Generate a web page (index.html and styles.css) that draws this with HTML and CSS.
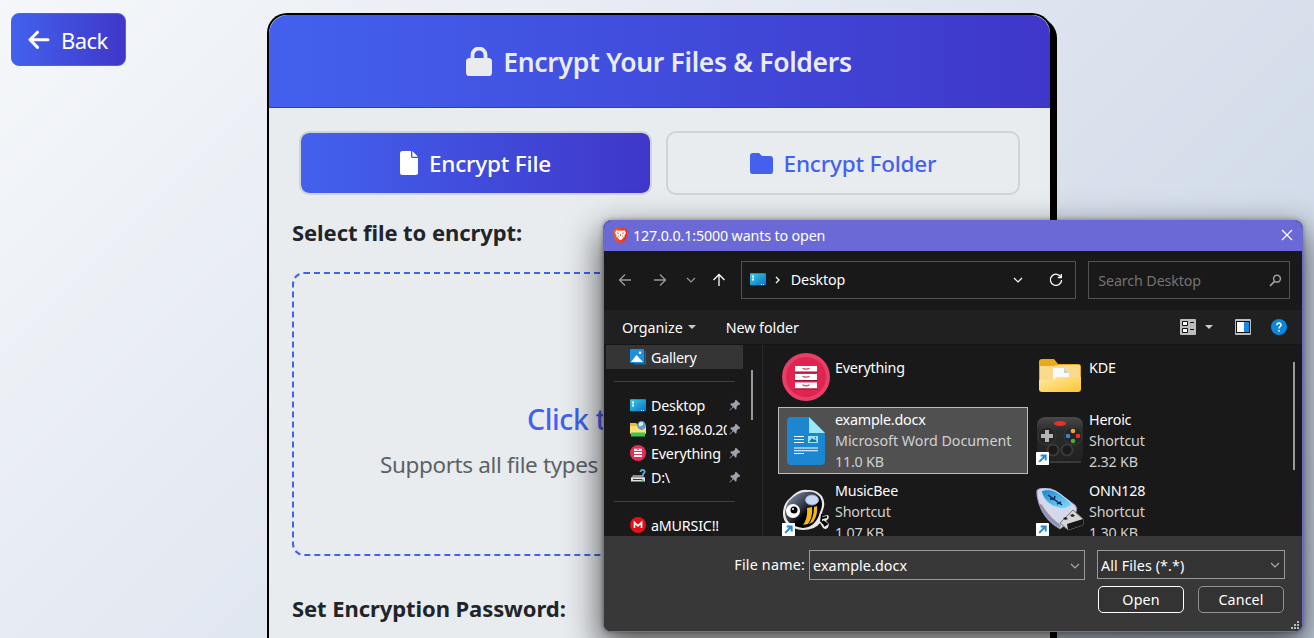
FILE: index.html
```html
<!DOCTYPE html>
<html lang="en">
<head>
<meta charset="utf-8">
<title>Encrypt Your Files &amp; Folders</title>
<link rel="stylesheet" href="styles.css">
</head>
<body>
<a class="back"><svg width="22" height="20" viewBox="0 0 22 20"><path d="M9.5 2.2 2 9.8l7.5 7.6M2.4 9.8H20" fill="none" stroke="#fff" stroke-width="3" stroke-linecap="round" stroke-linejoin="round"/></svg><span>Back</span></a>

<main class="card">
  <header class="card-header">
    <svg width="26" height="30" viewBox="0 0 26 30"><path d="M6.5 14V8a6.5 6.5 0 0 1 13 0v6" fill="none" stroke="#e9ecef" stroke-width="3.8"/><rect x="0" y="11" width="26" height="18" rx="3.6" fill="#e9ecef"/></svg>
    <h1>Encrypt Your Files &amp; Folders</h1>
  </header>
  <div class="card-body">
    <div class="tabs">
      <div class="tab tab-active"><svg width="18" height="24" viewBox="0 0 18 24"><path d="M2.500 0H11v5.500a1.500 1.500 0 0 0 1.500 1.500H18v14.500a2.500 2.500 0 0 1-2.500 2.500h-13A2.500 2.500 0 0 1 0 21.500v-19A2.500 2.500 0 0 1 2.500 0zM12.300 0 18 5.700h-5.700z" fill="#fff"/></svg><span>Encrypt File</span></div>
      <div class="tab"><svg width="23" height="21" viewBox="0 0 24 21" preserveAspectRatio="none"><path d="M2.500 0H9.500L12.500 3H21.500A2.500 2.500 0 0 1 24 5.500V18.500A2.500 2.500 0 0 1 21.500 21H2.500A2.500 2.500 0 0 1 0 18.500V2.500A2.500 2.500 0 0 1 2.500 0z" fill="#4361ee"/></svg><span>Encrypt Folder</span></div>
    </div>
    <h2 class="label label-file">Select file to encrypt:</h2>
    <div class="drop">
      <p class="drop-title">Click to upload</p>
      <p class="drop-note">Supports all file types</p>
    </div>
    <h2 class="label label-pass">Set Encryption Password:</h2>
  </div>
</main>

<svg class="defs" width="0" height="0">
  <defs>
    <linearGradient id="screen" x1="0" y1="0" x2="1" y2="1"><stop offset="0" stop-color="#35cfe4"/><stop offset="1" stop-color="#0f6fc6"/></linearGradient>
    <linearGradient id="brave" x1="0" x2="1"><stop offset="0" stop-color="#ff5a1f"/><stop offset="1" stop-color="#f0290f"/></linearGradient>
    <linearGradient id="folder" x1="0" y1="0" x2="1" y2="1"><stop offset="0" stop-color="#ffe9a8"/><stop offset="1" stop-color="#fcc62e"/></linearGradient>
    <linearGradient id="pad" x1="0" y1="0" x2="0" y2="1"><stop offset="0" stop-color="#4a4a4a"/><stop offset=".3" stop-color="#2b2b2b"/><stop offset="1" stop-color="#202020"/></linearGradient>
    <linearGradient id="usb" x1="0" y1="0" x2="1" y2="1"><stop offset="0" stop-color="#1d7fd0"/><stop offset="1" stop-color="#86e2fb"/></linearGradient>
    <linearGradient id="bee" x1="0" y1="0" x2="1" y2="1"><stop offset="0" stop-color="#9aa6c0"/><stop offset=".45" stop-color="#2c3140"/><stop offset=".6" stop-color="#000"/></linearGradient>
    <symbol id="desktop" viewBox="0 0 16 13"><rect y=".3" width="16" height="12" rx="1" fill="url(#screen)"/><path d="M2 2.500h2v2H2zM2 5.500h2v2H2zM11 11h1v1h-1zM13 11h1v1h-1z" fill="#fff"/></symbol>
    <symbol id="pin" viewBox="0 0 12 12"><path d="m7 .8 4.300 4.300-1 .8-.8-.1-1.800 1.800-.1 2.200-.9.900L4.200 8.200 1 11.400l-.5-.5L3.700 7.700 1.200 5.200l.9-.9 2.200-.1L6.100 2.400 6 1.600z" fill="#9ba3ac"/></symbol>
    <symbol id="drawer" viewBox="0 0 48 48"><circle cx="24" cy="24" r="24" fill="#e64068"/><circle cx="24" cy="24" r="20" fill="#e02450"/><path d="M13 13h22v6H13zM13 21h22v6H13zM13 29.500h22v6H13z" fill="#fff"/><path d="M12.500 19h23M12.500 27.500h23M12.500 36h23" stroke="#8e1231"/><path d="M20.500 15.300q3.500 1.700 7 0M20.500 23.300q3.500 1.700 7 0M20.500 31.700q3.500 2.500 7 0" fill="none" stroke="#d8415d" stroke-width="1.200"/></symbol>
    <symbol id="drawer-small" viewBox="0 0 16 16"><circle cx="8" cy="8" r="8" fill="#e22f58"/><path d="M4 3.700h8V6H4zM4 7h8v2H4zM4 10h8v2H4z" fill="#fff"/><path d="M7 4.700h2" stroke="#e22f58"/></symbol>
    <symbol id="arrow" viewBox="0 0 13 13"><rect width="13" height="13" rx=".7" fill="#fff"/><path d="M3.200 9.800 9 4M4.700 3.500h5v5" fill="none" stroke="#2188d9" stroke-width="1.900"/></symbol>
    <symbol id="chev" viewBox="0 0 10 6"><path d="m1 1 4 4 4-4" fill="none" stroke="currentColor" stroke-width="1.200"/></symbol>
  </defs>
</svg>

<section class="dialog">
  <div class="titlebar">
    <svg class="lion" width="15" height="17" viewBox="0 0 15 17"><path d="M4 .5h7l1.600 1.700 1.100-.2.900 2.200-.5 1.300.3 1.500-1.700 6.200L7.500 16.600 2.300 13.200.6 7l.3-1.500-.5-1.300L1.300 2l1.100.2z" fill="url(#brave)"/><path d="m3.200 3.300 2.500.5 1.800-.4 1.800.4 2.500-.5L13 6l-1.600 2.500.4 1-1.700 1.200-.7 1.300-1.900 1.200L5.600 12l-.7-1.300-1.700-1.200.4-1L2 6z" fill="#fff"/><path d="m3.900 5.800 2 .6M11.100 5.800l-2 .6M7.500 7.200v2M5.200 9l1 .8M9.800 9l-1 .8" stroke="#fa4b1c" stroke-width=".9"/></svg>
    <span>127.0.0.1:5000 wants to open</span>
    <svg class="close" width="12" height="12" viewBox="0 0 12 12"><path d="m1 1 10 10M11 1 1 11" stroke="#fff" stroke-width="1.200"/></svg>
  </div>
  <div class="nav">
    <div class="nav-btns">
      <svg class="dim" width="14" height="14" viewBox="0 0 14 14"><path d="M7 1.500 1.500 7 7 12.500M1.500 7H13" class="line"/></svg>
      <svg class="dim" width="14" height="14" viewBox="0 0 14 14"><path d="M7 1.500 12.500 7 7 12.500M12.500 7H1" class="line"/></svg>
      <svg class="dim" width="10" height="6"><use href="#chev"/></svg>
      <svg width="14" height="14" viewBox="0 0 14 14"><path d="M1.500 7 7 1.500 12.500 7M7 1.500V13" class="line"/></svg>
    </div>
    <div class="address">
      <svg width="16" height="13"><use href="#desktop"/></svg>
      <svg class="crumb" width="5" height="8" viewBox="0 0 5 8"><path d="M1 1l3 3-3 3" class="line"/></svg>
      <span>Desktop</span>
      <svg class="addr-chev" width="10" height="6"><use href="#chev"/></svg>
      <svg width="14" height="14" viewBox="0 0 14 14"><path d="M12 4.300A5.600 5.600 0 1 0 12.600 7M12.300 1v3.500H8.800" class="line"/></svg>
    </div>
    <div class="search"><span>Search Desktop</span><svg width="13" height="13" viewBox="0 0 13 13"><circle cx="8" cy="4.700" r="3.400" fill="none" stroke="#a0a0a0" stroke-width="1.500"/><path d="M5.500 7.300 1 12" stroke="#a0a0a0" stroke-width="1.700"/></svg></div>
  </div>
  <div class="commands">
    <span>Organize</span><i class="caret"></i><span class="new">New folder</span>
    <svg class="view" width="16" height="16" viewBox="0 0 16 16"><rect width="16" height="16" rx="1" fill="#bdbdbd"/><path d="M2.500 2.500h5v4h-5zM2.500 9.500h5v4h-5z" fill="#fff" stroke="#111"/><path d="M10 3.500h4M10 10.500h4" stroke="#111" stroke-width="1.200"/></svg>
    <i class="caret view-caret"></i>
    <svg class="pane" width="16" height="16" viewBox="0 0 16 16"><rect width="16" height="16" rx="1" fill="#bdbdbd"/><rect x="1.500" y="2.500" width="13" height="11" fill="#fff" stroke="#111"/><path d="M9 3h5v10H9z" fill="#128be0"/></svg>
    <svg width="16" height="16" viewBox="0 0 16 16"><circle cx="8" cy="8" r="8" fill="#0d87dc"/><path d="M6 6.200C6 3.300 10.100 3.500 10 6 9.900 7.500 8 7.600 8 9.600M8 11v1.600" fill="none" stroke="#fff" stroke-width="1.500"/></svg>
  </div>
  <div class="browser">
    <aside class="side">
      <div class="side-item gallery"><svg width="16" height="16" viewBox="0 0 16 16"><path d="M4 14h10.500V2H16v13.500H4z" fill="#1762ad"/><rect width="14" height="14" rx="1" fill="#1c91df"/><path d="m1 13 5.500-7L13 13z" fill="#fff"/><circle cx="10" cy="3.800" r="1.300" fill="#fff"/></svg><span>Gallery</span></div>
      <hr>
      <div class="side-item"><svg width="16" height="13"><use href="#desktop"/></svg><span>Desktop</span><svg class="pin" width="12" height="12"><use href="#pin"/></svg></div>
      <div class="side-item"><svg width="16" height="16" viewBox="0 0 16 16"><path d="M0 2h6l2 2h8v9H0z" fill="#f5b92f"/><path d="M0 5h16v7H0z" fill="#ffdf76"/><path d="M1 11.500h14v4H1z" fill="#38c94c"/><circle cx="11.500" cy="4.500" r="4.400" fill="#5d9dc6"/><path d="M9 2q3-2 4 0t-2 3q-3 1-2-3" fill="#d4edf8"/></svg><span class="clip">192.168.0.20</span><svg class="pin" width="12" height="12"><use href="#pin"/></svg></div>
      <div class="side-item"><svg width="16" height="16"><use href="#drawer-small"/></svg><span>Everything</span><svg class="pin" width="12" height="12"><use href="#pin"/></svg></div>
      <div class="side-item"><svg class="drive" width="16" height="14" viewBox="0 0 16 14"><path d="M3 6h9l3 3H1z" fill="#858a8e"/><path d="M1 8.500h14v4H1z" fill="#dbe0e2"/><path d="M3 10.500h9" stroke="#35393b"/><path d="M11.500 11h2" stroke="#21ba42" stroke-width="1.500"/><path d="M10.500 3q.3-2.500 2.500-2t1.500 2.500L13 5v2" fill="none" stroke="#5da9d6" stroke-width="1.800"/></svg><span>D:\</span><svg class="pin" width="12" height="12"><use href="#pin"/></svg></div>
      <hr>
      <div class="side-item"><svg width="16" height="16" viewBox="0 0 16 16"><circle cx="8" cy="8" r="8" fill="#e21018"/><path d="M4.500 11V5.500L8 8.800l3.500-3.300V11" fill="none" stroke="#fff" stroke-width="1.700"/></svg><span>aMURSIC!!</span></div>
    </aside>
    <div class="side-scroll"><i></i></div>
    <div class="files">
      <div class="file first"><svg width="48" height="48"><use href="#drawer"/></svg><div><b>Everything</b></div></div>
      <div class="file first"><svg width="48" height="48" viewBox="0 0 48 48"><path d="M3 9a3 3 0 0 1 3-3h12l4 5h20a3 3 0 0 1 3 3v22H3z" fill="#eaa91c"/><path d="M4 13h14l4-1h22v22H4z" fill="#fadb8b"/><path d="M17 15h11l5 5v12H17z" fill="#f9f9f9"/><path d="M28 15v5h5z" fill="#c8cdd3"/><path d="M3 27h13l5-3h24v12a3 3 0 0 1-3 3H6a3 3 0 0 1-3-3z" fill="url(#folder)"/></svg><div><b>KDE</b></div></div>
      <div class="file selected"><svg width="48" height="48" viewBox="0 0 48 48"><path d="M9 0h18l16 16v28a4 4 0 0 1-4 4H9a4 4 0 0 1-4-4V4a4 4 0 0 1 4-4z" fill="#1c86d1"/><path d="M27 0v16h16z" fill="#9ce8f8"/><path d="M12 19.500h10M12 22.500h10M12 25.500h10M12 31h24M12 33.800h24M12 36.500h10" stroke="#fff" stroke-width="1.100"/><rect x="26" y="19" width="10" height="7" fill="#9ce8f8"/><path d="m27 25 3-4 2 2 1-1 2 3z" fill="#1670af"/><circle cx="33.500" cy="20.800" r=".8" fill="#1670af"/></svg><div><b>example.docx</b><span class="kind">Microsoft Word Document</span><span>11.0 KB</span></div></div>
      <div class="file"><svg width="48" height="48" viewBox="0 0 48 48"><rect x="1" y="0" width="46" height="46" rx="8" fill="url(#pad)"/><ellipse cx="24" cy="6.500" rx="6" ry="2.500" fill="#ed3026"/><circle cx="11" cy="19" r="9" fill="#262626" stroke="#3a3a3a"/><circle cx="37" cy="19" r="9" fill="#262626" stroke="#3a3a3a"/><path d="M9 13h4v4h4v4h-4v4H9v-4H5v-4h4z" fill="#b4b4b4"/><circle cx="37" cy="14" r="2.300" fill="#f1a52b"/><circle cx="42" cy="19" r="2.300" fill="#e33528"/><circle cx="37" cy="24" r="2.300" fill="#45ac34"/><circle cx="32" cy="19" r="2.300" fill="#3685d3"/><circle cx="17" cy="33" r="5.500" fill="#1a1a1a" stroke="#3a3a3a" stroke-width="2"/><circle cx="31" cy="33" r="5.500" fill="#1a1a1a" stroke="#3a3a3a" stroke-width="2"/><path d="M14 45h31" stroke="#555"/><use href="#arrow" y="35" width="13" height="13"/></svg><div><b>Heroic</b><span>Shortcut</span><span>2.32 KB</span></div></div>
      <div class="file"><svg width="48" height="48" viewBox="0 0 48 48"><path d="M7 11Q17 0 26 2q8-1 14 6 4 7 1 14-2 4 0 6l5-1q2 3-1 5l-1 1 3 3q-1 7-6 4l-3-5q-5 7-17 7Q0 40 1 24 2 15 7 11z" fill="#e9e9e9"/><path d="M8 12Q17 3 25 4q8-1 13 5 4 7 0 15-4 15-17 16Q4 38 3 25q1-9 5-13z" fill="url(#bee)"/><path d="M25 20q1 10-4 17l5-1q5-7 4-17zM32 19q0 10-5 17l4-2q5-7 4-16z" fill="#f5b713"/><ellipse cx="30" cy="12" rx="6.500" ry="5" fill="#c9d9f4" stroke="#92a9d0"/><circle cx="11" cy="23" r="7" fill="#fff"/><circle cx="12" cy="22" r="3.500" fill="#000"/><circle cx="11" cy="21" r="1" fill="#fff"/><path d="m40 26-1 7 4 4m-3-7 5-1m-4 4 4 3-3 2" stroke="#000" stroke-width="1.800" fill="none"/><use href="#arrow" y="35" width="13" height="13"/></svg><div><b>MusicBee</b><span>Shortcut</span><span>1.07 KB</span></div></div>
      <div class="file"><svg width="48" height="48" viewBox="0 0 48 48"><path d="M1 2Q8-3 20 3l19 14q3 3 1 7l-7 10-9 7Q8 32 3 16 0 7 1 2z" fill="#d6d7ea" stroke="#8a8caf"/><path d="M6 17q8 13 19 20l-1 3Q8 31 3 15" fill="#9092ad"/><path d="M5 3q9-4 19 3l10 8q3 3-1 5-5 3-10 1Q9 17 5 3z" fill="url(#usb)" stroke="#b8e8fa"/><path d="m12 7 14 10M14 11l4 0 1-3M21 16l4-2" fill="none" stroke="#082b52" stroke-width="1.500"/><path d="m37 22 10 9v6l-15 5-8-7z" fill="#d5d5d5" stroke="#777"/><path d="m31 36 16-5v6l-15 5z" fill="#171717"/><path d="m27 30 3-1 2 2-3 1zM34 27l3-1 2 2-3 1z" fill="#222"/><use href="#arrow" y="35" width="13" height="13"/></svg><div><b>ONN128</b><span>Shortcut</span><span>1.30 KB</span></div></div>
    </div>
    <div class="file-scroll"><i></i></div>
  </div>
  <footer class="footer">
    <div class="foot-row"><label>File name:</label><div class="combo name"><span>example.docx</span><svg width="10" height="6"><use href="#chev"/></svg></div><div class="combo type"><span>All Files (*.*)</span><svg width="10" height="6"><use href="#chev"/></svg></div></div>
    <div class="foot-row buttons"><div class="btn btn-open">Open</div><div class="btn">Cancel</div></div>
    <svg class="grip" width="8" height="8" viewBox="0 0 8 8"><path d="M6 0h2v2H6zM3 3h2v2H3zM6 3h2v2H6zM0 6h2v2H0zM3 6h2v2H3zM6 6h2v2H6z" fill="#bbb"/></svg>
  </footer>
</section>
</body>
</html>
```

FILE: styles.css
```css
* { box-sizing: border-box; }
html, body { height: 638px; overflow: hidden; }
body {
  margin: 0;
  padding-top: 13px;
  position: relative;
  font-family: "Noto Sans", "Open Sans", sans-serif;
  color: #212529;
  background: linear-gradient(135deg, #f5f7fa 0%, #c3cfe2 100%) 0 0 / 1314px 900px no-repeat;
}
svg { display: block; flex: none; }
.defs { position: absolute; }
h1, h2, p { margin: 0; }

.back {
  position: absolute; left: 11px; top: 13px;
  width: 115px; height: 53px;
  display: flex; align-items: center; gap: 11px; padding-left: 16px;
  border: 1px solid #2f6ff5; border-radius: 8px;
  background: linear-gradient(90deg, #4361ee, #3f37c9);
  color: #fff; font-size: 22px; letter-spacing: -.6px;
}

.card {
  width: 785px; height: 625px; margin-left: 267px;
  border: 2px solid #000; border-bottom: 0; border-radius: 20px 20px 0 0;
  background: #e9ecef; box-shadow: 5px 5px 0 #000;
}
.card-header {
  height: 93px; display: flex; align-items: center; justify-content: center; gap: 11px;
  padding: 1px 1px 0 0;
  border-bottom: 1px solid #3a36b5; border-radius: 19px 19px 0 0;
  background: linear-gradient(90deg, #4361ee, #3f37c9);
  color: #e9ecef;
}
.card-header h1 { font-size: 26.5px; font-weight: 600; letter-spacing: -.33px; line-height: 40px; padding-top: 1px; }
.card-body { padding: 23px 23px 0; }
.tabs { display: grid; grid-template-columns: 353px 354px; gap: 14px; padding: 0 7px; }
.tab {
  height: 64px; display: flex; align-items: center; justify-content: center; gap: 11px;
  border: 2px solid #ced4da; border-radius: 10px;
  color: #4361ee; font-size: 22.5px; font-weight: 500; letter-spacing: -.2px;
}
.tab-active { color: #fff; background: linear-gradient(90deg, #4361ee, #3f37c9) padding-box; }
.label { font-size: 22px; line-height: 36px; font-weight: 700; letter-spacing: -.08px; }
.label-file { margin-top: 19px; }
.drop {
  height: 284px; margin-top: 22px; padding-top: 123px;
  border: 2px dashed #4361ee; border-radius: 12px; white-space: nowrap;
}
.drop-title { padding-left: 233px; font-size: 28.5px; line-height: 44px; font-weight: 500; color: #4361ee; letter-spacing: -.4px; }
.drop-note { padding-left: 86px; margin-top: 6px; font-size: 22.5px; line-height: 36px; color: #5c6167; letter-spacing: -.37px; }
.label-pass { margin-top: 34px; }

.dialog {
  position: absolute; left: 603px; top: 220px; width: 700px; height: 412px;
  display: flex; flex-direction: column;
  border: 1px solid #6b69d6; border-radius: 8px; overflow: hidden;
  background: #191919; color: #fff; font-size: 14.3px; letter-spacing: -.2px; white-space: nowrap;
  box-shadow: 0 14px 34px 4px rgba(0, 0, 0, .6), 0 0 5px rgba(0, 0, 0, .35);
}
.line { fill: none; stroke: currentColor; stroke-width: 1.3; }
.titlebar { height: 30px; display: flex; align-items: center; gap: 5px; padding: 0 9px 2px; background: #6b69d6; letter-spacing: -.15px; }
.close { margin-left: auto; }
.nav { height: 59px; display: flex; align-items: center; padding: 0 12px 2px 14px; }
.nav-btns { width: 123px; display: flex; align-items: center; }
.nav-btns svg:nth-child(2) { margin-left: 21px; }
.nav-btns svg:nth-child(3) { margin-left: 19px; }
.nav-btns svg:nth-child(4) { margin-left: 16px; }
.dim { color: #999; }
.address { width: 336px; height: 38px; display: flex; align-items: center; border: 1px solid #535353; padding: 0 12px 0 8px; }
.crumb { margin: 0 11px 0 9px; }
.addr-chev { margin: 0 26px 0 auto; }
.search { width: 202px; height: 38px; margin-left: 12px; display: flex; align-items: center; justify-content: space-between; border: 1px solid #535353; padding: 1px 7px 0 9px; color: #737373; letter-spacing: -.13px; }
.commands { height: 35px; display: flex; align-items: center; padding: 0 15px 0 18px; background: #202020; border-bottom: 1px solid #151515; letter-spacing: -.05px; }
.caret { border: 4px solid transparent; border-top: 4px solid #ccc; border-bottom: 0; margin-left: 5px; }
.new { margin-left: 30px; }
.view { margin-left: auto; }
.view-caret { margin-left: 9px; }
.pane { margin: 0 20px 0 22px; }

.browser { height: 191px; display: flex; overflow: hidden; }
.side { width: 139px; padding-left: 2px; overflow: hidden; }
.side-item { height: 24px; display: flex; align-items: center; padding: 0 2px 0 24px; }
.side-item span { margin-left: 5px; }
.gallery { background: #353535; }
.clip { width: 76px; overflow: hidden; letter-spacing: -.45px; }
.pin { margin-left: auto; }
.drive { margin-bottom: 3px; }
.side hr { height: 1px; border: 0; margin: 12px 8px 11px; background: #404040; }
.side-scroll { width: 20px; padding: 25px 0 0 8px; border-right: 1px solid #2b2b2b; }
.side-scroll i { display: block; width: 2px; height: 50px; background: #999; }
.files { display: grid; grid-template-columns: 250px 250px; grid-template-rows: 62px 67px 67px; column-gap: 4px; padding-left: 15px; align-content: start; }
.file { height: 67px; display: flex; align-items: center; gap: 5px; padding-left: 4px; line-height: 21px; }
.file b, .file span { display: block; font-weight: 400; }
.file span { color: #d0d0d0; }
.file .kind { letter-spacing: -.03px; }
.file.first { height: 62px; align-items: flex-start; padding-top: 8px; }
.file.first div { padding-top: 4px; }
.file.selected { border: 1px solid #bcbcbc; background: #505050; padding-left: 3px; }
.file:nth-child(n+5) { margin-top: 4px; }
.file-scroll { margin-left: auto; padding: 17px 7px 0 0; }
.file-scroll i { display: block; width: 2px; height: 108px; background: #999; }

.footer { flex: 1; position: relative; background: #383838; padding: 14px 17px 0 0; }
.foot-row { display: flex; justify-content: flex-end; align-items: flex-start; letter-spacing: .1px; }
.foot-row label { line-height: 30px; letter-spacing: .2px; }
.combo { display: flex; align-items: center; justify-content: space-between; height: 30px; padding: 1px 4px 0 3px; border: 1px solid #999; color: #fff; background: #383838; }
.combo svg { color: #aaa; }
.name { width: 276px; margin-left: 4px; }
.type { width: 188px; height: 29px; margin-left: 12px; background: #333; }
.buttons { gap: 14px; margin: 6px 1px 0 0; }
.btn { width: 86px; height: 27px; display: grid; place-items: center; border: 1px solid #929292; border-radius: 5px; background: #333; }
.btn-open { border-color: #fff; }
.grip { position: absolute; right: 3px; bottom: 2px; }
```
